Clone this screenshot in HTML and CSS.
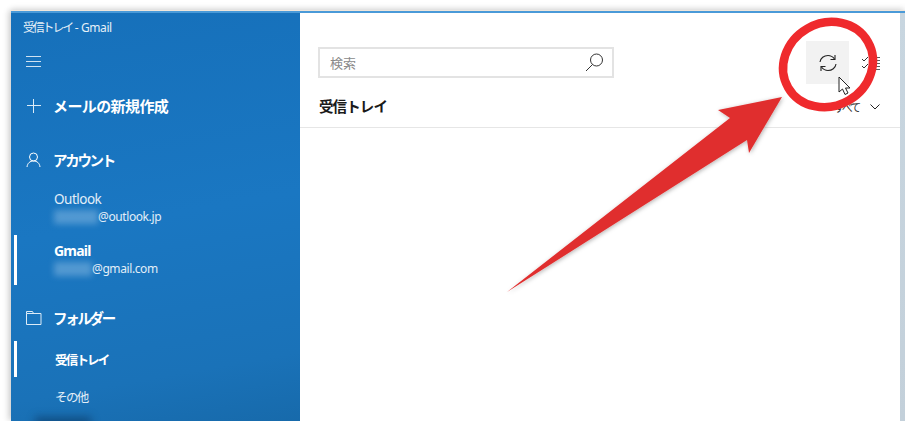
FILE: index.html
```html
<!DOCTYPE html>
<html lang="ja">
<head>
<meta charset="utf-8">
<title>受信トレイ - Gmail</title>
<link rel="stylesheet" href="styles.css">
</head>
<body>
<div class="window">
  <aside class="sidebar">
    <div class="title"><span class="title-jp">受信トレイ</span> - Gmail</div>
    <div class="icon-row menu-row">
      <svg class="ico" width="16" height="12" viewBox="0 0 16 12"><path d="M0 .5h15M0 5.500h15M0 10.500h15" stroke="#cfe2f2" stroke-width="1" fill="none"/></svg>
    </div>
    <div class="nav-head compose">
      <svg class="ico" width="16" height="16" viewBox="0 0 16 16"><path d="M7.500 1v14M1 7.500h14" stroke="#dcebf7" stroke-width="1" fill="none"/></svg>
      <span>メールの新規作成</span>
    </div>
    <div class="nav-head accounts">
      <svg class="ico" width="16" height="16" viewBox="0 0 16 16"><circle cx="7.500" cy="5" r="4" stroke="#fff" fill="none"/><path d="M1 15c.5-4 3-6 6.500-6s6 2 6.500 6" stroke="#fff" fill="none"/></svg>
      <span>アカウント</span>
    </div>
    <div class="account">
      <div class="acc-name">Outlook</div>
      <div class="acc-mail"><i class="blur b44"></i>@outlook.jp</div>
    </div>
    <div class="account active">
      <div class="acc-name strong">Gmail</div>
      <div class="acc-mail"><i class="blur b38"></i>@gmail.com</div>
    </div>
    <div class="nav-head folders">
      <svg class="ico" width="16" height="14" viewBox="0 0 16 14"><path d="M.5 2.500h14.500v11H.5zM.5 2.500v-2h6l1 2" stroke="#dcebf7" fill="none"/></svg>
      <span>フォルダー</span>
    </div>
    <div class="folder active strong">受信トレイ</div>
    <div class="folder">その他</div>
    <i class="smudge"></i>
  </aside>
  <main class="content">
    <div class="toolbar">
      <div class="search">
        <span class="placeholder">検索</span>
        <svg width="19" height="19" viewBox="0 0 19 19"><circle cx="11.500" cy="7" r="6" stroke="#333" fill="none"/><path d="M7.500 11.500L1 18" stroke="#333" fill="none"/></svg>
      </div>
      <div class="sync">
        <svg width="18" height="18" viewBox="0 0 18 18"><path d="M1 8C1.500 4 5 1.500 9 1.500c3 0 5 1.500 6.500 3.500M17 10c-.5 4-4 6.500-8 6.500-3 0-5-1.500-6.500-3.500" stroke="#222" stroke-width="1.100" fill="none"/><path d="M16 1v4.500h-4.500M2 17v-4.500h4.500" stroke="#222" stroke-width="1.100" fill="none"/></svg>
      </div>
      <svg class="select-ico" width="18" height="14" viewBox="0 0 18 14"><path d="M0 3l2 2 4-4M0 10l2 2 4-4" stroke="#333" fill="none"/><path d="M8 1.500h10M8 4.500h10M8 7.500h10M8 10.500h10M8 13.500h10" stroke="#333" fill="none" opacity=".8"/></svg>
    </div>
    <div class="list-head">
      <h1>受信トレイ</h1>
      <div class="filter">
        <span>すべて</span>
        <svg width="10" height="6" viewBox="0 0 10 6"><path d="M.5.500L5 5 9.500.500" stroke="#222" fill="none"/></svg>
      </div>
    </div>
  </main>
  <div class="edge"></div>
</div>
<svg class="annotation" width="905" height="421" viewBox="0 0 905 421">
  <defs>
    <filter id="sh" x="-10%" y="-10%" width="120%" height="120%"><feDropShadow dx="1" dy="1" stdDeviation="2" flood-color="#000" flood-opacity=".3"/></filter>
  </defs>
  <polygon points="507,292 730,118 718,110 782,97 749,153 747,140" fill="#e02f2f" filter="url(#sh)"/>
  <ellipse cx="828" cy="64.500" rx="46" ry="41.500" transform="rotate(-30 828 64.500)" fill="none" stroke="#ef2a2d" stroke-width="8.500"/>
  <path d="M839 77v15l3.500-3 2.500 5.500 3-1.500-2.500-5h4.500z" fill="#fff" stroke="#222" stroke-width="1"/>
</svg>
</body>
</html>
```
FILE: styles.css
```css
* { box-sizing: border-box; }
html, body { margin: 0; height: 100%; overflow: hidden; }
body {
  background: #fff;
  font-family: "Noto Sans", "Noto Sans CJK JP", sans-serif;
  padding: 11px 0 0 11px;
}
.window {
  display: flex;
  height: 410px;
  border-top: 2px solid #4a9ad8;
  box-shadow: 0 -1px 0 #efe6dc, 0 -3px 6px rgba(0,0,0,.1), -3px 0 6px rgba(0,0,0,.14);
}
.sidebar {
  position: relative;
  width: 289px;
  flex: none;
  overflow: hidden;
  color: #fff;
  background: linear-gradient(170deg, #1670ba 0%, #1a77c2 50%, #1a72b8 85%, #176aab 100%);
}
.title {
  padding: 6px 0 0 12px;
  height: 29px;
  font-size: 12px;
  line-height: 18px;
  letter-spacing: -.4px;
  color: #e6f0f8;
}
.title-jp { letter-spacing: -2.200px; }
.icon-row { height: 35px; padding: 14px 0 0 15px; }
.ico { flex: none; display: block; }
.nav-head {
  display: flex;
  align-items: center;
  gap: 11px;
  padding-left: 15px;
  height: 24px;
  font-size: 15px;
  font-weight: 700;
  line-height: 20px;
}
.compose { margin-top: 17px; letter-spacing: -.6px; }
.accounts { margin-top: 30px; font-size: 14.500px; letter-spacing: -2.300px; }
.folders { margin-top: 19px; font-size: 14.500px; letter-spacing: -2.300px; }
.account { position: relative; height: 52px; padding: 6px 0 0 43px; }
.accounts + .account { margin-top: 11px; }
.acc-name { font-size: 13.500px; line-height: 20px; letter-spacing: -.5px; color: #e2eef8; }
.acc-name.strong { font-size: 14px; font-weight: 700; color: #fff; letter-spacing: -.8px; }
.acc-mail { display: flex; font-size: 12px; line-height: 16px; letter-spacing: -.4px; color: #e2eef8; }
.blur { display: block; height: 14px; margin-top: 1px; background: rgba(150,195,230,.45); filter: blur(3px); }
.b44 { width: 44px; }
.b38 { width: 38px; }
.active::before {
  content: "";
  position: absolute;
  left: 3px;
  top: 0;
  bottom: 0;
  width: 3px;
  background: #fff;
}
.account.active::before { height: 50px; bottom: auto; }
.folder {
  position: relative;
  height: 36px;
  padding: 1px 0 0 44px;
  font-size: 12.500px;
  line-height: 36px;
  letter-spacing: -1.600px;
  color: #e2eef8;
}
.folders + .folder { margin-top: 11px; }
.folder.strong { padding-top: 2px; font-weight: 700; color: #fff; margin-bottom: 2px; letter-spacing: -1.800px; }
.smudge {
  position: absolute;
  left: 24px;
  bottom: -6px;
  width: 56px;
  height: 10px;
  background: rgba(10,50,90,.55);
  filter: blur(4px);
}
.content { flex: 1; min-width: 0; background: #fff; }
.edge { width: 5px; flex: none; background: linear-gradient(#c8d6e0, #c3d0da); }
.toolbar {
  display: flex;
  align-items: center;
  height: 71px;
  padding: 28px 0 0 18px;
}
.search {
  display: flex;
  align-items: center;
  justify-content: space-between;
  width: 296px;
  height: 31px;
  padding: 0 8px 0 10px;
  border: 2px solid #e3e3e3;
}
.placeholder { font-size: 13px; color: #8a8a8a; }
.sync {
  display: flex;
  align-items: center;
  justify-content: center;
  width: 43px;
  height: 43px;
  margin-left: 192px;
  background: #f2f2f2;
}
.select-ico { margin-left: 13px; }
.list-head {
  display: flex;
  align-items: center;
  justify-content: space-between;
  height: 44px;
  padding: 0 20px 0 19px;
  border-bottom: 1px solid #e6e6e6;
}
.list-head h1 { margin: 0; font-size: 14.500px; line-height: 44px; font-weight: 700; letter-spacing: -.9px; color: #1a1a1a; }
.filter { display: flex; align-items: center; gap: 11px; padding-top: 3px; font-size: 11px; letter-spacing: -2.200px; color: #333; }
.annotation { position: absolute; left: 0; top: 0; pointer-events: none; }
```
